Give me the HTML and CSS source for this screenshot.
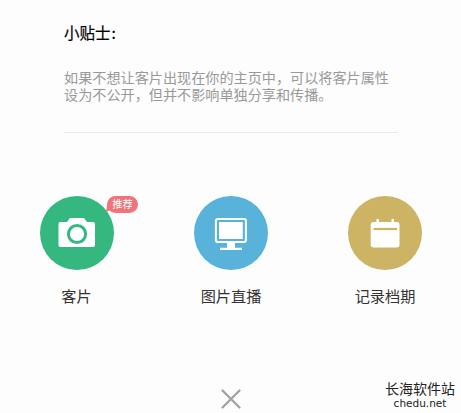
FILE: index.html
```html
<!DOCTYPE html>
<html lang="zh-CN">
<head>
<meta charset="utf-8">
<title>小贴士</title>
<link rel="stylesheet" href="styles.css">
</head>
<body>
<main class="page">
  <section class="tips">
    <h1 class="tips-title">小贴士<span class="colon">:</span></h1>
    <p class="tips-text">如果不想让客片出现在你的主页中，可以将客片属性<br>设为不公开，但并不影响单独分享和传播。</p>
  </section>
  <nav class="actions">
    <a class="action">
      <span class="disc green">
        <svg width="74" height="74" viewBox="0 0 74 74">
          <path fill="#fff" d="M20.500 26H27L29.500 22.600Q30 22 30.800 22H43.200Q44 22 44.400 22.600L47 26H53Q55 26 55 28V49Q55 51 53 51H20.500Q18.500 51 18.500 49V28Q18.500 26 20.500 26Z"/>
          <circle cx="37" cy="38" r="8.600" fill="none" stroke="#35b880" stroke-width="3"/>
        </svg>
        <span class="badge">推荐
          <svg class="badge-tail" width="6" height="7" viewBox="0 0 6 7"><path fill="#ed757c" d="M1 0L0 7L6 4Z"/></svg>
        </span>
      </span>
      <span class="label first">客片</span>
    </a>
    <a class="action">
      <span class="disc blue">
        <svg width="74" height="74" viewBox="0 0 74 74">
          <rect x="21.900" y="22.900" width="30" height="23.200" rx="1.800" fill="none" stroke="#fff" stroke-width="2"/>
          <rect x="25" y="26" width="23.800" height="17" fill="#fff"/>
          <path fill="#fff" d="M33 47H41V51.700H48V54H26V51.700H33Z"/>
        </svg>
      </span>
      <span class="label">图片直播</span>
    </a>
    <a class="action">
      <span class="disc gold">
        <svg width="74" height="74" viewBox="0 0 74 74">
          <rect x="22.700" y="26" width="28.800" height="25.600" rx="3" fill="#fff"/>
          <path d="M29.700 24V28M44.700 24V28" stroke="#fff" stroke-width="2.600" stroke-linecap="round"/>
          <path d="M25.500 33H49" stroke="#cdb464" stroke-width="2.200"/>
        </svg>
      </span>
      <span class="label">记录档期</span>
    </a>
  </nav>
  <footer class="footer">
    <svg class="close" width="20" height="20" viewBox="0 0 20 20"><path d="M1.500 1.500L18.500 18.500M18.500 1.500L1.500 18.500" stroke="#a0a0a0" stroke-width="2.200" stroke-linecap="round"/></svg>
    <div class="mark"><span class="mark-name">长海软件站</span><span class="mark-site">chedu.net</span></div>
  </footer>
</main>
</body>
</html>
```
FILE: styles.css
```css
* { box-sizing: border-box; }
body {
  margin: 0;
  background: #fdfdfd;
  font-family: "Noto Sans CJK SC", sans-serif;
}
.page {
  height: 413px;
  display: flex;
  flex-direction: column;
  overflow: hidden;
}
.tips {
  margin: 0 63px 0 64px;
  height: 133px;
  padding-top: 21px;
  border-bottom: 1px solid #e9e9e9;
}
.tips-title {
  margin: 0;
  font-size: 15.5px;
  line-height: 22px;
  font-weight: 400;
  color: #000;
  -webkit-text-stroke: 0.2px #000;
}
.colon { margin-left: 1px; }
.tips-text {
  margin: 26px 0 0;
  font-size: 14.13px;
  line-height: 17px;
  color: #999;
  white-space: nowrap;
}
.actions {
  display: flex;
  justify-content: space-between;
  margin-top: 63px;
  padding: 0 39px 0 40px;
}
.action {
  width: 74px;
  display: flex;
  flex-direction: column;
  align-items: center;
}
.disc {
  position: relative;
  width: 74px;
  height: 74px;
  border-radius: 50%;
}
.disc > svg { display: block; }
.green { background: #35b880; }
.blue { background: #59b2da; }
.gold { background: #cdb464; }
.badge {
  position: absolute;
  left: 67px;
  top: 0;
  width: 31px;
  height: 17px;
  border-radius: 8.5px;
  background: #ed757c;
  color: #fff;
  font-size: 10.2px;
  line-height: 16px;
  text-align: center;
  white-space: nowrap;
}
.badge-tail {
  position: absolute;
  left: -1px;
  top: 9px;
}
.label {
  margin-top: 14px;
  font-size: 15.2px;
  line-height: 22px;
  color: #333;
  white-space: nowrap;
}
.first { margin-right: 1px; }
.footer {
  flex: 1;
  display: grid;
  grid-template-columns: 1fr 20px 1fr;
  align-items: start;
  padding-top: 74px;
}
.close {
  grid-column: 2;
  margin-top: 9px;
}
.mark {
  grid-column: 3;
  justify-self: end;
  width: 70px;
  margin-right: 6px;
  display: flex;
  flex-direction: column;
  align-items: center;
  color: #222;
  white-space: nowrap;
}
.mark-name {
  font-size: 14px;
  line-height: 16px;
}
.mark-site {
  font-family: "DejaVu Sans", sans-serif;
  font-size: 10.5px;
  line-height: 15px;
}
```
